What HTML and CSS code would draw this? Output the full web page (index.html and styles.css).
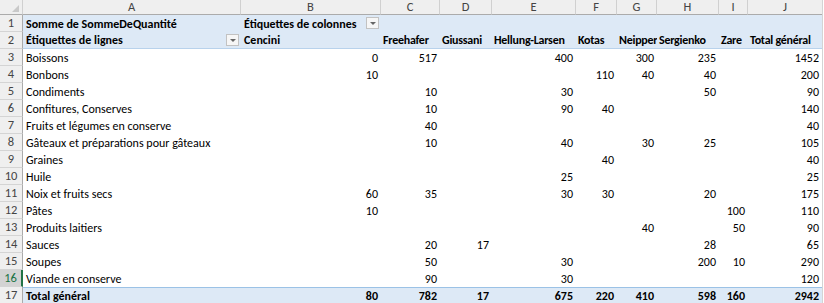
FILE: index.html
```html
<!DOCTYPE html>
<html>
<head>
    <meta charset="UTF-8">
    <title>Tableau croisé dynamique</title>
    <link rel="stylesheet" href="styles.css">
</head>
<body>
    <table class="sheet">
        <colgroup>
            <col class="w-rh"><col class="w-a"><col class="w-b"><col class="w-c"><col class="w-d">
            <col class="w-e"><col class="w-f"><col class="w-g"><col class="w-h"><col class="w-i"><col class="w-j">
        </colgroup>
        <thead>
            <tr class="letters">
                <th class="corner"><span class="tri"></span></th>
                <th>A</th><th>B</th><th>C</th><th>D</th><th>E</th>
                <th>F</th><th>G</th><th>H</th><th>I</th><th>J</th>
            </tr>
        </thead>
        <tbody>
            <tr class="pv-head">
                <td class="rh">1</td>
                <td class="lbl b">Somme de SommeDeQuantité</td>
                <td class="lbl b has-btn">Étiquettes de colonnes<span class="drop"></span></td>
                <td></td><td></td><td></td><td></td><td></td><td></td><td></td><td></td>
            </tr>
            <tr class="pv-head pv-last">
                <td class="rh">2</td>
                <td class="lbl b has-btn">Étiquettes de lignes<span class="drop"></span></td>
                <td class="lbl b">Cencini</td>
                <td class="lbl b tight">Freehafer</td>
                <td class="lbl b tight">Giussani</td>
                <td class="lbl b tight">Hellung-Larsen</td>
                <td class="lbl b tight">Kotas</td>
                <td class="lbl b tight">Neipper</td>
                <td class="lbl b tight">Sergienko</td>
                <td class="lbl b tight">Zare</td>
                <td class="lbl b tight">Total général</td>
            </tr>
            <tr><td class="rh">3</td><td class="lbl">Boissons</td><td class="n">0</td><td class="n">517</td><td></td><td class="n">400</td><td></td><td class="n">300</td><td class="n">235</td><td></td><td class="n">1452</td></tr>
            <tr><td class="rh">4</td><td class="lbl">Bonbons</td><td class="n">10</td><td></td><td></td><td></td><td class="n">110</td><td class="n">40</td><td class="n">40</td><td></td><td class="n">200</td></tr>
            <tr><td class="rh">5</td><td class="lbl">Condiments</td><td></td><td class="n">10</td><td></td><td class="n">30</td><td></td><td></td><td class="n">50</td><td></td><td class="n">90</td></tr>
            <tr><td class="rh">6</td><td class="lbl">Confitures, Conserves</td><td></td><td class="n">10</td><td></td><td class="n">90</td><td class="n">40</td><td></td><td></td><td></td><td class="n">140</td></tr>
            <tr><td class="rh">7</td><td class="lbl">Fruits et légumes en conserve</td><td></td><td class="n">40</td><td></td><td></td><td></td><td></td><td></td><td></td><td class="n">40</td></tr>
            <tr><td class="rh">8</td><td class="lbl">Gâteaux et préparations pour gâteaux</td><td></td><td class="n">10</td><td></td><td class="n">40</td><td></td><td class="n">30</td><td class="n">25</td><td></td><td class="n">105</td></tr>
            <tr><td class="rh">9</td><td class="lbl">Graines</td><td></td><td></td><td></td><td></td><td class="n">40</td><td></td><td></td><td></td><td class="n">40</td></tr>
            <tr><td class="rh">10</td><td class="lbl">Huile</td><td></td><td></td><td></td><td class="n">25</td><td></td><td></td><td></td><td></td><td class="n">25</td></tr>
            <tr><td class="rh">11</td><td class="lbl">Noix et fruits secs</td><td class="n">60</td><td class="n">35</td><td></td><td class="n">30</td><td class="n">30</td><td></td><td class="n">20</td><td></td><td class="n">175</td></tr>
            <tr><td class="rh">12</td><td class="lbl">Pâtes</td><td class="n">10</td><td></td><td></td><td></td><td></td><td></td><td></td><td class="n">100</td><td class="n">110</td></tr>
            <tr><td class="rh">13</td><td class="lbl">Produits laitiers</td><td></td><td></td><td></td><td></td><td></td><td class="n">40</td><td></td><td class="n">50</td><td class="n">90</td></tr>
            <tr><td class="rh">14</td><td class="lbl">Sauces</td><td></td><td class="n">20</td><td class="n">17</td><td></td><td></td><td></td><td class="n">28</td><td></td><td class="n">65</td></tr>
            <tr><td class="rh">15</td><td class="lbl">Soupes</td><td></td><td class="n">50</td><td></td><td class="n">30</td><td></td><td></td><td class="n">200</td><td class="n">10</td><td class="n">290</td></tr>
            <tr><td class="rh selected">16</td><td class="lbl">Viande en conserve</td><td></td><td class="n">90</td><td></td><td class="n">30</td><td></td><td></td><td></td><td></td><td class="n">120</td></tr>
            <tr class="pv-total">
                <td class="rh">17</td><td class="lbl b">Total général</td>
                <td class="n b">80</td><td class="n b">782</td><td class="n b">17</td><td class="n b">675</td>
                <td class="n b">220</td><td class="n b">410</td><td class="n b">598</td><td class="n b">160</td><td class="n b">2942</td>
            </tr>
        </tbody>
    </table>
</body>
</html>
```

FILE: styles.css
```css
body {
    margin: 0;
    padding: 0;
    background: #ffffff;
    font-family: Calibri, Carlito, Lato, sans-serif;
    font-size: 12px;
    color: #000000;
    overflow: hidden;
}
.sheet {
    table-layout: fixed;
    width: 822px;
    border-collapse: separate;
    border-spacing: 0;
    border-right: 1px solid #d4d4d4;
}
.w-rh { width: 23px; }
.w-a { width: 218px; }
.w-b { width: 140px; }
.w-c { width: 59px; }
.w-d { width: 52px; }
.w-e { width: 84px; }
.w-f { width: 41px; }
.w-g { width: 40px; }
.w-h { width: 62px; }
.w-i { width: 29px; }
.w-j { width: 74px; }

td, th {
    padding: 0;
    white-space: nowrap;
    overflow: hidden;
    line-height: 16px;
}

/* column letters */
.letters th {
    height: 14px;
    background: #efefef;
    color: #444444;
    font-weight: normal;
    font-size: 12.5px;
    line-height: 14px;
    text-align: center;
    border-right: 1px solid #d0d0d0;
    border-bottom: 1px solid #ababab;
}
.letters th:last-child {
    border-right: none;
}
.corner {
    position: relative;
}
.tri {
    position: absolute;
    right: 3px;
    bottom: 2px;
    width: 0;
    height: 0;
    border-left: 7px solid transparent;
    border-bottom: 7px solid #c9c9c9;
}

/* row numbers */
tbody tr {
    height: 17px;
}
.rh {
    background: #efefef;
    color: #444444;
    text-align: center;
    border-right: 1px solid #ababab;
    border-bottom: 1px solid #d4d4d4;
    font-size: 12.5px;
}
.rh.selected {
    background: #d3d3d3;
    color: #217346;
    border-right: 2px solid #217346;
}

/* pivot cells */
.lbl {
    padding-left: 3px;
    text-align: left;
}
.lbl.tight {
    padding-left: 2px;
    letter-spacing: -0.25px;
}
.n {
    padding-right: 3px;
    text-align: right;
}
.b {
    font-weight: bold;
}
.pv-head td:not(.rh), .pv-total td:not(.rh) {
    background: #dde9f6;
}
.pv-last td:not(.rh) {
    border-bottom: 1px solid #b8d2ec;
}
.pv-total td:not(.rh) {
    border-top: 1px solid #9bc2e6;
}
.has-btn {
    position: relative;
}
.drop {
    position: absolute;
    right: 2px;
    top: 2px;
    width: 11px;
    height: 10px;
    background: #f6f6f6;
    border: 1px solid #c2c2c2;
}
.drop::after {
    content: "";
    position: absolute;
    left: 3px;
    top: 4px;
    border-left: 3px solid transparent;
    border-right: 3px solid transparent;
    border-top: 3px solid #666666;
}
```
